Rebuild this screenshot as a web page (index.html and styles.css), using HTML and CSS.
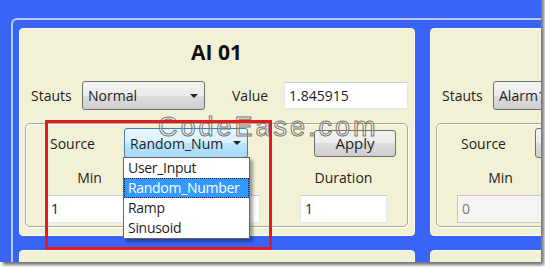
FILE: index.html
```html
<html>
    <head>
        <title>AI Simulator</title>
        <link rel="stylesheet" href="styles.css">
    </head>
    <body>
        <div class="shot">
            <div class="frame">
                <div class="grid">

                    <div class="panel">
                        <div class="title">AI 01</div>
                        <div class="status">
                            <span class="lbl">Stauts</span>
                            <div class="combo"><span>Normal</span><i class="arrow"></i></div>
                            <span class="lbl value-lbl">Value</span>
                            <div class="textbox wide">1.845915</div>
                        </div>
                        <div class="group">
                            <div class="source">
                                <span class="lbl src-lbl">Source</span>
                                <div class="combo open">
                                    <span>Random_Num</span><i class="arrow"></i>
                                    <ul class="list">
                                        <li>User_Input</li>
                                        <li class="sel">Random_Number</li>
                                        <li>Ramp</li>
                                        <li>Sinusoid</li>
                                    </ul>
                                </div>
                                <button class="apply">Apply</button>
                            </div>
                            <div class="cols heads">
                                <span>Min</span>
                                <span>Max</span>
                                <span>Duration</span>
                            </div>
                            <div class="cols">
                                <div class="textbox">1</div>
                                <div class="textbox">10</div>
                                <div class="textbox">1</div>
                            </div>
                        </div>
                    </div>

                    <div class="panel">
                        <div class="title">AI 02</div>
                        <div class="status">
                            <span class="lbl">Stauts</span>
                            <div class="combo"><span>Alarm1</span><i class="arrow"></i></div>
                            <span class="lbl value-lbl">Value</span>
                            <div class="textbox wide">0</div>
                        </div>
                        <div class="group">
                            <div class="source">
                                <span class="lbl src-lbl">Source</span>
                                <div class="combo"><span>User_Input</span><i class="arrow"></i></div>
                                <button class="apply">Apply</button>
                            </div>
                            <div class="cols heads">
                                <span>Min</span>
                                <span>Max</span>
                                <span>Duration</span>
                            </div>
                            <div class="cols">
                                <div class="textbox off">0</div>
                                <div class="textbox off">0</div>
                                <div class="textbox off">0</div>
                            </div>
                        </div>
                    </div>

                    <div class="panel">
                        <div class="title">AI 03</div>
                        <div class="status">
                            <span class="lbl">Stauts</span>
                            <div class="combo"><span>Normal</span><i class="arrow"></i></div>
                            <span class="lbl value-lbl">Value</span>
                            <div class="textbox wide">0</div>
                        </div>
                    </div>

                    <div class="panel">
                        <div class="title">AI 04</div>
                        <div class="status">
                            <span class="lbl">Stauts</span>
                            <div class="combo"><span>Normal</span><i class="arrow"></i></div>
                            <span class="lbl value-lbl">Value</span>
                            <div class="textbox wide">0</div>
                        </div>
                    </div>

                </div>
            </div>
            <div class="watermark">CodeEase.com</div>
            <div class="mark"></div>
        </div>
    </body>
</html>
```

FILE: styles.css
```css
body{
    margin: 0;
    background: white;
    font-family: "Open Sans", "Noto Sans", sans-serif;
    font-size: 14px;
    color: #1e1e1e;
}
.shot{
    position: relative;
    width: 541px;
    height: 268px;
    margin-top: -6px;
    background: #3a64f5;
    overflow: hidden;
    box-shadow: 3px 3px 3px rgba(0,0,0,0.55);
}
.frame{
    margin: 24px 0 0 11px;
    border-top: 2px solid #bccbfd;
    border-left: 2px solid #bccbfd;
    border-top-left-radius: 6px;
    padding: 8px 0 0 6px;
}
.grid{
    display: grid;
    grid-template-columns: 396px 396px;
    grid-auto-rows: 208px;
    column-gap: 15px;
    row-gap: 14px;
}
.panel{
    box-sizing: border-box;
    background: #f2f0d5;
    border: 1px solid #fcfcf2;
    border-radius: 4px;
    padding: 0 6px 0 5px;
}
.title{
    margin-top: 9px;
    height: 28px;
    line-height: 28px;
    text-align: center;
    font-size: 21px;
    font-weight: bold;
    color: #111;
}
.status{
    display: flex;
    align-items: center;
    margin-top: 15px;
    height: 29px;
    padding-left: 6px;
}
.lbl{
    width: 51px;
    flex: none;
}
.value-lbl{
    width: 52px;
    margin-left: 27px;
}
.combo{
    position: relative;
    box-sizing: border-box;
    width: 123px;
    height: 29px;
    flex: none;
    display: flex;
    align-items: center;
    padding-left: 5px;
    border: 1px solid #707070;
    border-radius: 3px;
    background: linear-gradient(#f3f3f3, #ebebeb 50%, #dddddd 50%, #cfcfcf);
    white-space: nowrap;
}
.combo .arrow{
    position: absolute;
    right: 6px;
    top: 12px;
    border-left: 4px solid transparent;
    border-right: 4px solid transparent;
    border-top: 4px solid #222;
}
.textbox{
    box-sizing: border-box;
    width: 87px;
    height: 28px;
    line-height: 26px;
    padding-left: 4px;
    background: white;
    border: 1px solid #e3e9ef;
    border-top-color: #c9ccd2;
}
.textbox.wide{
    width: 124px;
    height: 27px;
    line-height: 25px;
}
.textbox.off{
    background: #f4f4f4;
    border-color: #c8c8c8;
    color: #7a7a7a;
}
.group{
    box-sizing: border-box;
    margin-top: 13px;
    height: 104px;
    border: 1px solid #a9a99d;
    border-radius: 5px;
    box-shadow: inset 1px 1px 0 #ffffff, 1px 1px 0 #ffffff;
}
.source{
    display: flex;
    align-items: center;
    margin-top: 4px;
    height: 30px;
    padding-left: 24px;
}
.src-lbl{
    width: 74px;
}
.source .combo{
    width: 124px;
    height: 30px;
}
.combo.open{
    border-color: #3c7fb1;
    background: linear-gradient(#eaf6fd, #d9f0fc 50%, #bee6fd 50%, #a7d9f5);
}
.list{
    position: absolute;
    top: 28px;
    left: -2px;
    width: 127px;
    box-sizing: border-box;
    margin: 0;
    padding: 0;
    list-style: none;
    background: white;
    border: 1px solid #646464;
    box-shadow: 3px 3px 3px rgba(0,0,0,0.35);
    z-index: 2;
}
.list li{
    height: 20px;
    line-height: 18px;
    padding-left: 3px;
    border: 1px dotted transparent;
    box-sizing: border-box;
    font-size: 14px;
    letter-spacing: -0.3px;
}
.list li.sel{
    background: #3399ff;
    color: white;
    border-color: #0b2a66;
}
.apply{
    margin-left: auto;
    margin-right: 11px;
    width: 82px;
    height: 27px;
    padding: 0;
    border: 1px solid #707070;
    border-radius: 3px;
    background: linear-gradient(#f3f3f3, #ebebeb 50%, #dddddd 50%, #cfcfcf);
    font-family: "Open Sans", "Noto Sans", sans-serif;
    font-size: 15px;
    color: #1e1e1e;
}
.cols{
    display: grid;
    grid-template-columns: 1fr 1fr 1fr;
    justify-items: center;
    margin-top: 7px;
}
.heads{
    margin-top: 10px;
    height: 20px;
    line-height: 20px;
}
.watermark{
    position: absolute;
    left: 158px;
    top: 118px;
    line-height: 30px;
    font-family: "Liberation Sans", Arial, sans-serif;
    font-size: 27px;
    letter-spacing: 3px;
    color: rgba(255,255,255,0.25);
    -webkit-text-stroke: 1px rgba(105,105,105,0.9);
    z-index: 3;
}
.mark{
    position: absolute;
    left: 45px;
    top: 126px;
    width: 227px;
    height: 130px;
    box-sizing: border-box;
    border: 3px solid #e41b1b;
    z-index: 3;
}
```
